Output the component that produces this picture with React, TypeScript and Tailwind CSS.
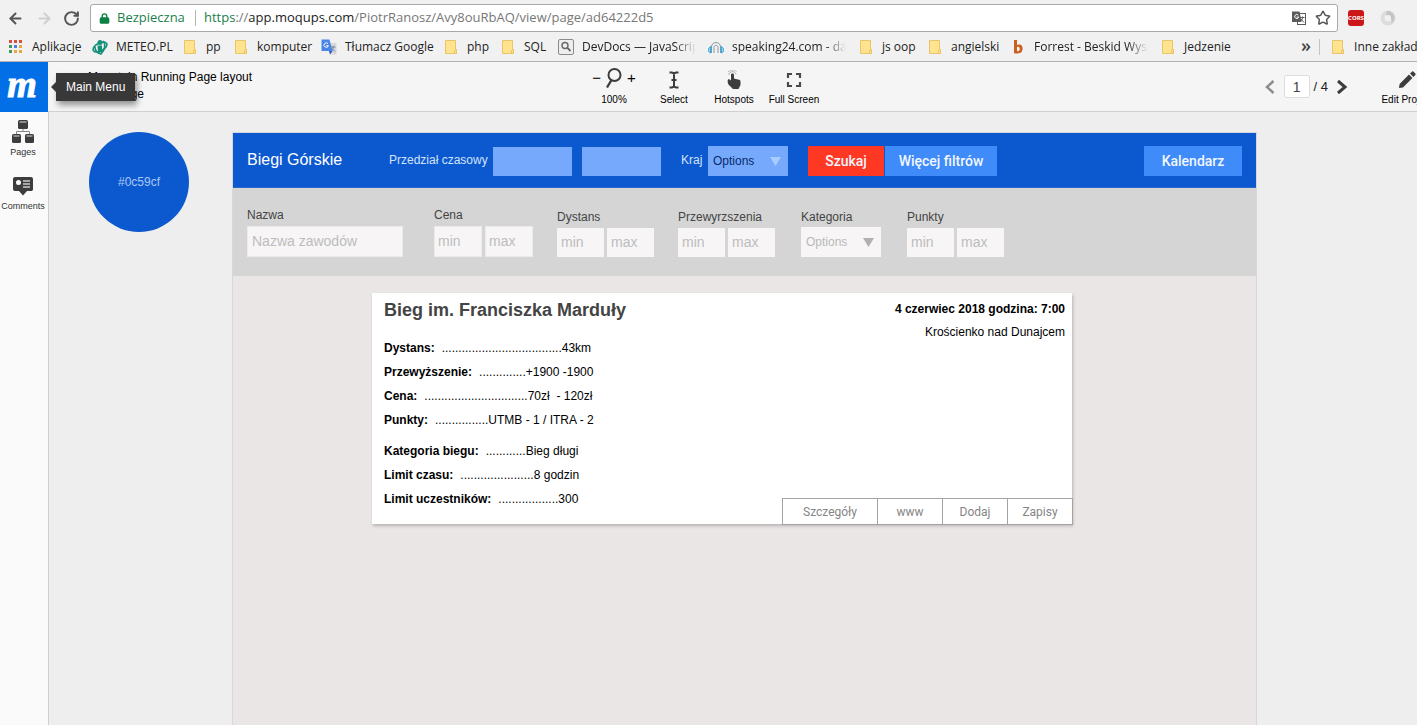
import React from "react";
import { ArrowLeft, ArrowRight, Lock, RotateCw, Star } from "lucide-react";

function FolderIcon() {
  return (
    <svg width="16" height="16" viewBox="0 0 16 16" aria-hidden="true">
      <path d="M2.5 1.5h10v9h1v4h-11z" fill="#ffe38f" stroke="#e9c567" />
      <path d="M11.500 14.500v-3l1-1h1v4z" fill="#ffdf80" stroke="#e9c567" />
    </svg>
  );
}

function AppsIcon() {
  const colors = ["#d8503f", "#d8503f", "#d8503f", "#3f9b5b", "#4a80e8", "#e8a93a", "#3f9b5b", "#e8a93a", "#e8a93a"];
  return (
    <svg width="16" height="16" viewBox="0 0 16 16" aria-hidden="true">
      {colors.map((c, i) => (
        <rect key={i} x={1 + (i % 3) * 5} y={1 + Math.floor(i / 3) * 5} width="3" height="3" fill={c} />
      ))}
    </svg>
  );
}

function MeteoIcon() {
  return (
    <svg width="16" height="16" viewBox="0 0 16 16" fill="none" aria-hidden="true">
      <ellipse cx="8" cy="8" rx="7.500" ry="4" transform="rotate(-28 8 8)" stroke="#149077" strokeWidth="1.600" />
      <path d="M11 2c3 3 2 9-2 13-4-1-6-4-6-7" stroke="#149077" strokeWidth="1.600" />
      <circle cx="8" cy="3.500" r="2.500" fill="#149077" />
      <path d="M5.500 6.500h4.500v7h-4z" fill="#149077" />
    </svg>
  );
}

function TranslateIcon() {
  return (
    <svg width="16" height="16" viewBox="0 0 16 16" aria-hidden="true">
      <path d="M7 4h8.500v11.500H9z" fill="#d5d7da" />
      <path d="M10 8h4.500M12.200 7v1c0 2-1 3-2 4M11 9.500l3 3" stroke="#75869a" fill="none" />
      <path d="M.5.5h8l3 11.500h-11z" fill="#4a86e8" />
      <path d="M8 12h3.500L9 15.500z" fill="#3158b8" />
      <path d="M7 4.700a2.200 2.200 0 1 0 .4 2H5.400" stroke="#fff" strokeWidth="1" fill="none" />
    </svg>
  );
}

function DevDocsIcon() {
  return (
    <svg width="16" height="16" viewBox="0 0 16 16" fill="none" aria-hidden="true">
      <rect x=".5" y=".5" width="15" height="15" rx="1.500" fill="#eee" stroke="#8a8a8a" />
      <circle cx="7" cy="6.500" r="3" stroke="#666" strokeWidth="1.400" />
      <path d="M9.200 8.700l3.300 3.300" stroke="#666" strokeWidth="1.800" />
    </svg>
  );
}

function HeadphonesIcon() {
  return (
    <svg width="16" height="16" viewBox="0 0 16 16" fill="none" aria-hidden="true">
      <path d="M3.500 14V8c0-6 9-6 9 0v6M6 14V8.500c0-3 4-3 4 0V14" stroke="#8b98a3" />
      <path d="M3 7.500C-.5 9-.5 12.500 2.500 14zM13 7.500c3.500 1.500 3.500 5 .5 6.500z" fill="#8ed4f4" stroke="#2aa3dc" />
    </svg>
  );
}

function ForrestIcon() {
  return (
    <svg width="16" height="16" viewBox="0 0 16 16" fill="none" aria-hidden="true">
      <path d="M4 1h3v5c4-1.500 6 1 5.500 4.500C12 14.500 8 15 4 14.200z" fill="#cb5f20" />
      <path d="M7 8c2-1 3 .5 2.700 2.300C9.500 12.500 8 12.500 7 12z" fill="#f2f2f2" />
    </svg>
  );
}

function PageTranslateIcon() {
  return (
    <svg width="16" height="16" viewBox="0 0 16 16" fill="none" aria-hidden="true">
      <rect x="6.500" y="3.500" width="8" height="11" fill="#fff" stroke="#5a5a5a" />
      <path d="M9 7.500h4.500M11.500 6.500v1c0 2-1 3-2.500 4M10 9l3 3.500" stroke="#5a5a5a" />
      <path d="M1 1.500h7.500l2 10.500H1z" fill="#5a5a5a" />
      <path d="M7.300 5.200a2 2 0 1 0 .4 1.800H5.700" stroke="#fff" />
    </svg>
  );
}

function ZoomIcon() {
  return (
    <svg width="18" height="22" viewBox="0 0 18 22" fill="none" stroke="#3d3d3d" aria-hidden="true">
      <circle cx="9.500" cy="8" r="6" strokeWidth="2" />
      <path d="M6.500 13L2 20.500" strokeWidth="2.400" />
    </svg>
  );
}

function SelectIcon() {
  return (
    <svg width="18" height="20" viewBox="0 0 18 20" fill="none" stroke="#3d3d3d" strokeWidth="2" aria-hidden="true">
      <path d="M4.500 2.500h2.500l2 1 2-1h2.500M9 3v14M4.500 17.500h2.500l2-1 2 1h2.500M6.500 10h5" />
    </svg>
  );
}

function HotspotIcon() {
  return (
    <svg width="18" height="20" viewBox="0 0 18 20" fill="none" aria-hidden="true">
      <path
        d="M6 4.800c0-1.800 3-1.800 3 0V8.500l5 1.200c1.200.3 1.500 1 1.500 2v3.300L13.500 19H8l-4.500-4.500c-1-1.500-1-4-.5-5 1-.5 1.800 0 3 1z"
        fill="#3d3d3d"
      />
      <path d="M4 4.500C4 .8 11 .8 11 4.500" stroke="#777" strokeDasharray="1 1" />
      <path d="M3 2C5-.3 10-.3 12 2" stroke="#999" strokeDasharray="1 1" />
    </svg>
  );
}

function FullScreenIcon() {
  return (
    <svg width="16" height="16" viewBox="0 0 16 16" fill="none" stroke="#4a4a4a" strokeWidth="2.200" aria-hidden="true">
      <path d="M2 6V2h4M10 2h4v4M14 10v4h-4M6 14H2v-4" />
    </svg>
  );
}

function PencilIcon() {
  return (
    <svg width="18" height="18" viewBox="0 0 18 18" fill="#3d3d3d" aria-hidden="true">
      <path d="M1 17l.6-4L11 3.600l3.400 3.400L5 16.400zM12 2.600L14 .7c.5-.5 1-.4 1.500 0l1.800 1.800c.5.5.5 1 0 1.500l-1.900 2z" />
    </svg>
  );
}

function PagesIcon() {
  return (
    <svg width="24" height="24" viewBox="0 0 24 24" fill="#3d3d3d" aria-hidden="true">
      <rect x="7" y="0" width="10" height="9" rx="1.500" />
      <rect x="1" y="14" width="9" height="9" rx="1.500" />
      <rect x="14" y="14" width="9" height="9" rx="1.500" />
      <path d="M8.500 2h7M2.500 16h6M15.500 16h6" stroke="#ddd" />
      <path d="M12 9v2.500M5.500 14v-2.500h13V14" stroke="#888" fill="none" />
    </svg>
  );
}

function CommentsIcon() {
  return (
    <svg width="22" height="20" viewBox="0 0 22 20" aria-hidden="true">
      <path d="M3 1h16c1.500 0 2 1 2 2v10c0 1.500-.7 2-2 2h-4l-4 4.500L7 15H3c-1.300 0-2-.7-2-2V3c0-1 .7-2 2-2z" fill="#3d3d3d" />
      <circle cx="6.500" cy="6.500" r="2.500" fill="#fff" />
      <path d="M11 5h7M11 8h7M11 11h7" stroke="#ccc" strokeWidth="1.300" />
    </svg>
  );
}

type Bookmark = { label: string; icon: React.ReactNode; width: string; fade?: boolean };

const bookmarks: Bookmark[] = [
  { label: "Aplikacje", icon: <AppsIcon />, width: "w-[84px]" },
  { label: "METEO.PL", icon: <MeteoIcon />, width: "w-[90px]" },
  { label: "pp", icon: <FolderIcon />, width: "w-[51px]" },
  { label: "komputer", icon: <FolderIcon />, width: "w-[88px]" },
  { label: "Tłumacz Google", icon: <TranslateIcon />, width: "w-[122px]" },
  { label: "php", icon: <FolderIcon />, width: "w-[57px]" },
  { label: "SQL", icon: <FolderIcon />, width: "w-[58px]" },
  { label: "DevDocs — JavaScript", icon: <DevDocsIcon />, width: "w-[150px]", fade: true },
  { label: "speaking24.com - darmowy", icon: <HeadphonesIcon />, width: "w-[150px]", fade: true },
  { label: "js oop", icon: <FolderIcon />, width: "w-[69px]" },
  { label: "angielski", icon: <FolderIcon />, width: "w-[83px]" },
  { label: "Forrest - Beskid Wyspowy", icon: <ForrestIcon />, width: "w-[150px]", fade: true },
  { label: "Jedzenie", icon: <FolderIcon />, width: "w-[84px]" },
];

function BrowserChrome() {
  return (
    <div className="border-b border-[#b3b3b3] bg-[#f1f1f1] font-['Open_Sans','Noto_Sans',sans-serif]">
      <div className="flex h-9 items-center pl-[7px] text-[#555]">
        <button aria-label="Wstecz"><ArrowLeft size={17} strokeWidth={2.8} /></button>
        <button aria-label="Dalej" className="ml-3 text-[#cfcfcf]"><ArrowRight size={17} strokeWidth={2.8} /></button>
        <button aria-label="Odśwież" className="ml-2.5"><RotateCw size={17} strokeWidth={2.8} /></button>
        <div className="ml-2.5 flex h-7 min-w-0 flex-1 items-center rounded-[3px] border border-[#a9a9a9] bg-white pr-1.5 pl-2">
          <Lock size={11} strokeWidth={3} className="text-[#0b8043] [&_rect]:fill-[#0b8043]" />
          <span className="ml-[7px] w-[70px] text-[13px] whitespace-nowrap text-[#1a7f4b]">Bezpieczna</span>
          <span className="mx-2 h-4 w-px bg-[#b5b5b5]" />
          <div className="min-w-0 flex-1 truncate text-[13px] text-[#777]">
            <span className="text-[#1a7f4b]">https</span>://<span className="text-[#222]">app.moqups.com</span>/PiotrRanosz/Avy8ouRbAQ/view/page/ad64222d5
          </div>
          <button aria-label="Przetłumacz tę stronę"><PageTranslateIcon /></button>
          <button aria-label="Dodaj do zakładek" className="ml-2"><Star size={16} strokeWidth={2.2} /></button>
        </div>
        <span className="ml-2.5 flex h-4 w-4 items-center justify-center rounded-[3px] bg-[#cc1719] text-[6px] font-bold text-white">CORS</span>
        <svg className="mr-[21px] ml-4" width="16" height="16" viewBox="0 0 16 16" fill="none" aria-hidden="true">
          <circle cx="8" cy="8" r="5.500" stroke="#dcdcdc" strokeWidth="4" />
          <path d="M7 1c4-.5 7.500 2.500 7.500 7 0 2-1 4-3 5.500 1-4-1-7-5.500-8z" fill="#c4c4c4" />
          <circle cx="8" cy="8" r="3" fill="#f1f1f1" />
        </svg>
      </div>
      <nav className="flex h-[25px] items-center overflow-hidden pb-1 pl-2 text-[12px] whitespace-nowrap text-[#222]">
        {bookmarks.map((b) => (
          <a key={b.label} href="#" className={`flex shrink-0 items-center gap-2 ${b.width}`}>
            <span className="shrink-0">{b.icon}</span>
            <span className={b.fade ? "w-[114px] overflow-hidden [mask-image:linear-gradient(to_right,black_82%,transparent)]" : ""}>{b.label}</span>
          </a>
        ))}
        <button className="ml-auto pb-1 text-[18px] leading-4 font-semibold text-[#444]">»</button>
        <span className="mr-2.5 ml-2 h-4 w-px shrink-0 bg-[#c4c4c4]" />
        <a href="#" className="-mr-2.5 flex shrink-0 items-center gap-2">
          <FolderIcon />
          Inne zakładki
        </a>
      </nav>
    </div>
  );
}

const tools = [
  { label: "Select", icon: <SelectIcon /> },
  { label: "Hotspots", icon: <HotspotIcon /> },
  { label: "Full Screen", icon: <FullScreenIcon /> },
];

function AppBar() {
  return (
    <header className="flex h-[50px] overflow-x-clip bg-[#f5f5f5] text-[12px] text-black">
      <div className="relative w-12 shrink-0">
        <button aria-label="Main Menu" className="flex h-[50px] w-full items-center justify-center bg-[#026fe6] pr-1 pb-1.5 font-['Liberation_Serif',serif] text-[38px] leading-none font-bold text-white italic [-webkit-text-stroke:1px_white]">
          m
        </button>
        <div role="tooltip" className="absolute top-[11px] left-14 z-10 flex h-7 items-center bg-[#383838] px-2.5 whitespace-nowrap text-white shadow-[2px_4px_6px_rgba(0,0,0,0.4)]">
          <span className="absolute top-[9px] -left-[5px] border-y-[5px] border-r-[5px] border-y-transparent border-r-[#383838]" />
          Main Menu
        </div>
      </div>
      <div className="flex min-w-0 flex-1 border-b border-[#d0d0d0]">
        <div className="w-[536px] shrink-0 pt-[7px] pl-10 leading-[17px]">
          <div>Mountain Running Page layout</div>
          <div>Main page</div>
        </div>
        <div className="flex shrink-0 text-[10px]">
          <div className="flex w-[60px] flex-col items-center pt-1.5">
            <div className="flex h-6 items-center gap-1 pb-1 text-[15px]">
              <button aria-label="Zoom out">−</button>
              <ZoomIcon />
              <button aria-label="Zoom in">+</button>
            </div>
            <span className="leading-4">100%</span>
          </div>
          {tools.map((t) => (
            <button key={t.label} className="flex w-[60px] flex-col items-center pt-1.5 whitespace-nowrap">
              <span className="flex h-6 items-center">{t.icon}</span>
              <span className="leading-4">{t.label}</span>
            </button>
          ))}
        </div>
        <div className="ml-auto flex shrink-0 items-center">
          <button aria-label="Previous page">
            <svg width="12" height="16" viewBox="0 0 12 16" fill="none" stroke="#8c8c8c" strokeWidth="2.500" aria-hidden="true"><path d="M9.500 2L3 8l6.500 6" /></svg>
          </button>
          <input aria-label="Page number" defaultValue="1" className="ml-2 h-[23px] w-[26px] rounded-[3px] border border-[#ddd] bg-white text-center text-[14px] text-[#444]" />
          <span className="ml-1 pt-px text-[13px] text-[#222]">/ 4</span>
          <button aria-label="Next page" className="ml-2">
            <svg width="12" height="16" viewBox="0 0 12 16" fill="none" stroke="#3d3d3d" strokeWidth="3" aria-hidden="true"><path d="M2 2l7 6-7 6" /></svg>
          </button>
        </div>
        <button className="-mr-[17px] ml-8 flex w-[54px] shrink-0 flex-col items-center pt-1.5 text-[10px] whitespace-nowrap">
          <span className="flex h-6 items-center"><PencilIcon /></span>
          <span className="leading-4">Edit Project</span>
        </button>
      </div>
    </header>
  );
}

function Sidebar() {
  return (
    <aside className="flex w-[49px] shrink-0 flex-col items-center border-r border-[#cfcfcf] bg-[#fafafa] pr-0.5 text-[9px] text-[#333]">
      <button className="mt-2 flex flex-col items-center">
        <PagesIcon />
        <span className="leading-4">Pages</span>
      </button>
      <button className="mt-4 flex flex-col items-center">
        <CommentsIcon />
        <span className="mt-0.5 leading-4">Comments</span>
      </button>
    </aside>
  );
}

function Triangle() {
  return (
    <svg className="pointer-events-none absolute top-[11px] right-[7px]" width="11" height="9" viewBox="0 0 11 9" fill="currentColor" aria-hidden="true">
      <path d="M0 0h11L5.500 9z" />
    </svg>
  );
}

function RangeFilter({ label, tall = false }: { label: string; tall?: boolean }) {
  const size = tall ? "h-[31px] w-12 border-[#ebebeb]" : "h-[29px] w-[47px] border-[#f7f5f6]";
  return (
    <fieldset>
      <legend className="h-5 leading-[18px]">{label}</legend>
      <div className="flex gap-[3px] text-[14px]">
        <input aria-label={`${label} min`} placeholder="min" className={`border bg-[#f7f5f6] px-[3px] pb-0.5 placeholder:text-[#bdbdbd] ${size}`} />
        <input aria-label={`${label} max`} placeholder="max" className={`border bg-[#f7f5f6] px-[3px] pb-0.5 placeholder:text-[#bdbdbd] ${size}`} />
      </div>
    </fieldset>
  );
}

function SearchBar() {
  return (
    <div className="flex h-[55px] items-center border-b border-[#2668cc] bg-[#0c59cf] px-3.5 pt-0.5 text-[12px] text-[#d3e3fb]">
      <h1 className="w-[142px] shrink-0 pb-0.5 text-[16px] text-white">Biegi Górskie</h1>
      <label htmlFor="from" className="w-[104px] shrink-0 pb-0.5 whitespace-nowrap">Przedział czasowy</label>
      <input id="from" className="h-[29px] w-[79px] bg-[#76a9fb]" />
      <input aria-label="Przedział czasowy do" className="ml-2.5 h-[29px] w-[79px] bg-[#76a9fb]" />
      <label htmlFor="country" className="ml-5 w-[27px] pb-0.5">Kraj</label>
      <div className="relative text-[#a9cbff]">
        <select id="country" className="h-[30px] w-20 appearance-none bg-[#76a9fb] px-[5px] text-[#082a6b]">
          <option>Options</option>
        </select>
        <Triangle />
      </div>
      <div className="ml-5 flex gap-px font-[Roboto,sans-serif] text-[14px] font-medium text-[#f2f7ff]">
        <button className="h-[30px] w-[76px] bg-[#ff3823]">Szukaj</button>
        <button className="h-[30px] w-28 bg-[#3f8bf9]">Więcej filtrów</button>
      </div>
      <button className="ml-auto h-[30px] w-[98px] bg-[#3f8bf9] font-[Roboto,sans-serif] text-[14px] font-medium text-[#f2f7ff]">Kalendarz</button>
    </div>
  );
}

function Filters() {
  return (
    <div className="flex h-[88px] items-end gap-6 bg-[#d5d5d5] px-3.5 pb-[19px] text-[12px] text-[#444]">
      <div className="flex flex-col">
        <label htmlFor="name" className="h-5 leading-[18px]">Nazwa</label>
        <input id="name" placeholder="Nazwa zawodów" className="mr-[7px] h-[31px] w-[156px] border border-[#ebebeb] bg-[#f7f5f6] px-1 pb-0.5 text-[14px] placeholder:text-[#bdbdbd]" />
      </div>
      <RangeFilter label="Cena" tall />
      <RangeFilter label="Dystans" />
      <RangeFilter label="Przewyrzszenia" />
      <div className="mx-0.5 flex flex-col">
        <label htmlFor="category" className="h-[19px] leading-[18px]">Kategoria</label>
        <div className="relative text-[#b0b0b0]">
          <select id="category" className="h-[30px] w-20 appearance-none bg-[#f7f5f6] px-[5px] text-[#b9b9b9]">
            <option>Options</option>
          </select>
          <Triangle />
        </div>
      </div>
      <RangeFilter label="Punkty" />
    </div>
  );
}

const factGroups = [
  [
    { label: "Dystans:", dots: 36, value: "43km" },
    { label: "Przewyższenie:", dots: 14, value: "+1900 -1900" },
    { label: "Cena:", dots: 31, value: "70zł  - 120zł" },
    { label: "Punkty:", dots: 16, value: "UTMB - 1 / ITRA - 2" },
  ],
  [
    { label: "Kategoria biegu:", dots: 12, value: "Bieg długi" },
    { label: "Limit czasu:", dots: 22, value: "8 godzin" },
    { label: "Limit uczestników:", dots: 18, value: "300" },
  ],
];

const actions = [
  { label: "Szczegóły", width: "w-24" },
  { label: "www", width: "w-[66px]" },
  { label: "Dodaj", width: "w-[66px]" },
  { label: "Zapisy", width: "w-[66px]" },
];

function RaceCard() {
  return (
    <article className="mt-[17px] mr-[184px] ml-[139px] flex justify-between bg-white text-[12px] text-black shadow-[1px_2px_3px_rgba(0,0,0,0.22)]">
      <div className="pt-1.5 pb-[13px] pl-3">
        <h2 className="text-[18px] leading-[22px] font-bold text-[#444]">Bieg im. Franciszka Marduły</h2>
        <div className="flex flex-col gap-[7px] pt-[15px]">
          {factGroups.map((facts, i) => (
            <dl key={i}>
              {facts.map((f) => (
                <div key={f.label} className="flex leading-6 whitespace-pre">
                  <dt className="mr-[7px] font-bold">{f.label}</dt>
                  <dd>{".".repeat(f.dots) + f.value}</dd>
                </div>
              ))}
            </dl>
          ))}
        </div>
      </div>
      <div className="-mr-px -mb-px flex flex-col items-end justify-between">
        <div className="pt-[5px] pr-2 text-right leading-[23px]">
          <p className="font-bold">4 czerwiec 2018 godzina: 7:00</p>
          <p>Krościenko nad Dunajcem</p>
        </div>
        <div className="flex font-[Roboto,sans-serif] text-[#858585]">
          {actions.map((a) => (
            <button key={a.label} className={`-ml-px h-[27px] border border-[#a3a3a3] ${a.width}`}>{a.label}</button>
          ))}
        </div>
      </div>
    </article>
  );
}

export default function App() {
  return (
    <div className="flex min-h-screen flex-col overflow-x-hidden bg-[#eee] font-['Liberation_Sans',Arial,sans-serif]">
      <BrowserChrome />
      <AppBar />
      <div className="flex flex-1">
        <Sidebar />
        <main className="flex min-w-0 flex-1 pt-5 pl-10">
          <div className="flex h-[100px] w-[100px] shrink-0 items-center justify-center rounded-full bg-[#0c59cf] text-[12px] text-[#a9c8f5]">#0c59cf</div>
          <section className="mr-40 ml-[43px] min-w-0 flex-1 border border-b-0 border-[#d8d8dc] bg-[#eae6e5]">
            <SearchBar />
            <Filters />
            <RaceCard />
          </section>
        </main>
      </div>
    </div>
  );
}
